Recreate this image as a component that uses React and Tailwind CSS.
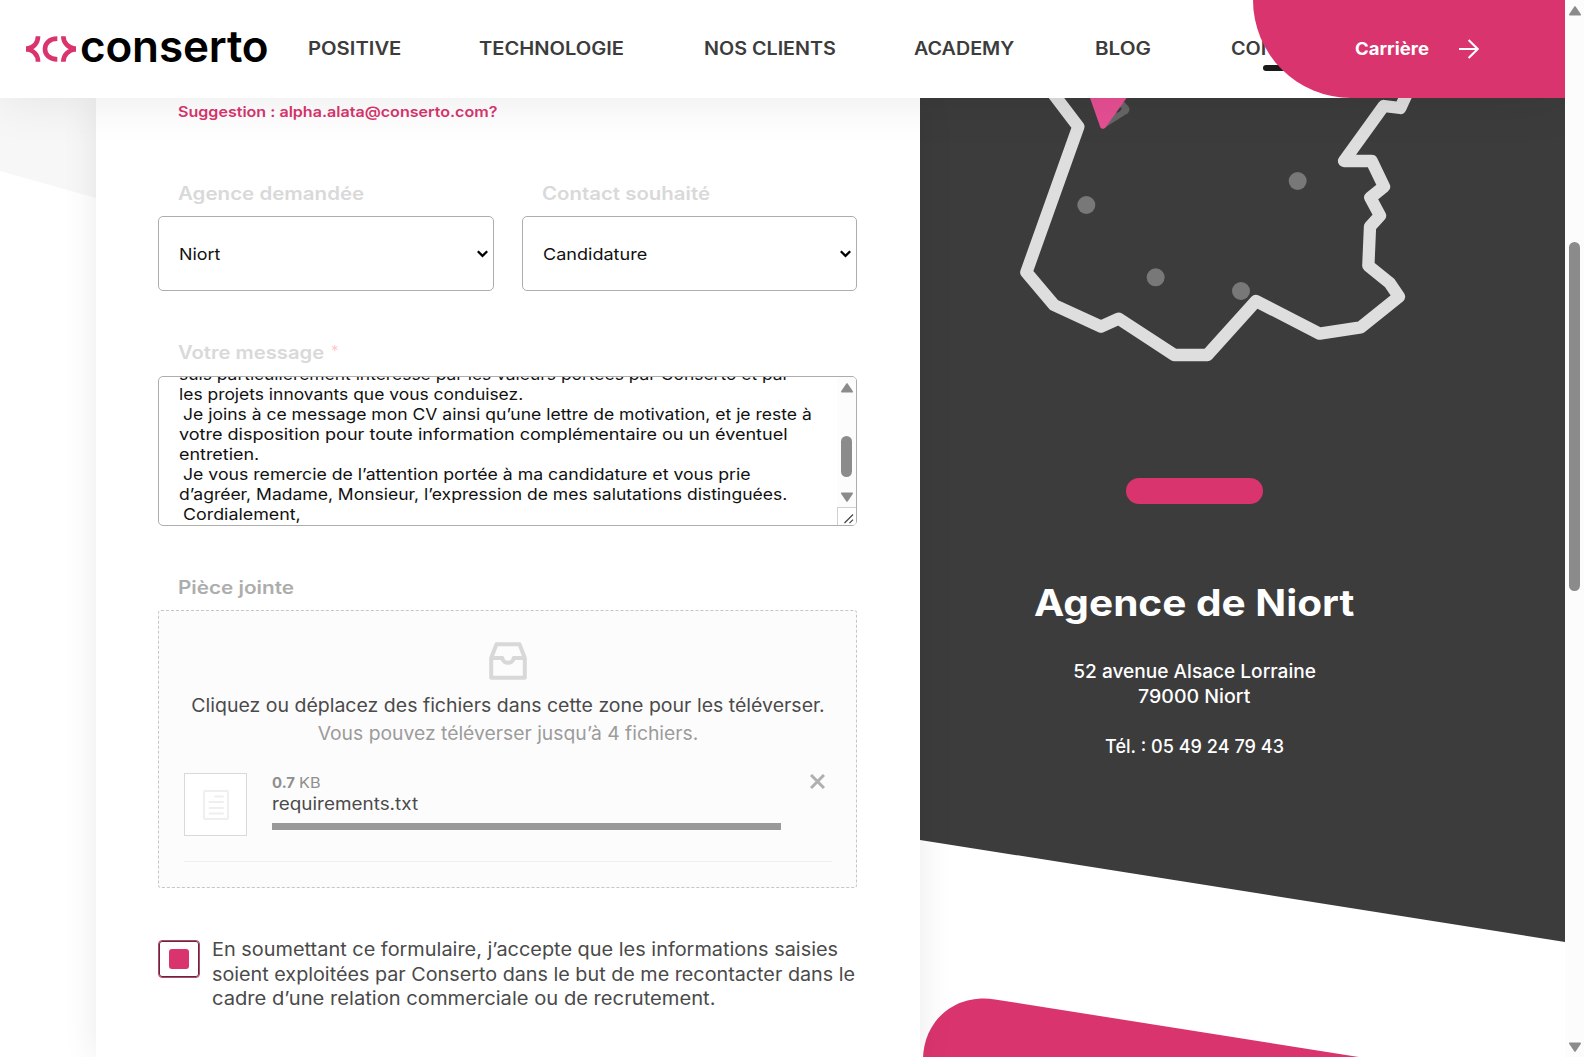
const NAV = [
  { label: "POSITIVE", box: "w-[171px]", cls: "scale-x-[1.125]" },
  { label: "TECHNOLOGIE", box: "w-[225px]", cls: "scale-x-[1.117]" },
  { label: "NOS CLIENTS", box: "w-[210px]", cls: "scale-x-[1.096]" },
  { label: "ACADEMY", box: "w-[181px]", cls: "scale-x-[1.095]" },
  { label: "BLOG", box: "w-[136px]", cls: "scale-x-[1.145]" },
  { label: "CONTACT", box: "w-[100px]", cls: "scale-x-[1.1]" },
];

const MESSAGE = [
  { text: "suis particulièrement intéressé par les valeurs portées par Conserto et par", cls: "scale-x-[1.088]" },
  { text: "les projets innovants que vous conduisez.", cls: "scale-x-[1.089]" },
  { text: "Je joins à ce message mon CV ainsi qu’une lettre de motivation, et je reste à", cls: "ml-[4px] scale-x-[1.095]" },
  { text: "votre disposition pour toute information complémentaire ou un éventuel", cls: "scale-x-[1.127]" },
  { text: "entretien.", cls: "scale-x-[1.12]" },
  { text: "Je vous remercie de l’attention portée à ma candidature et vous prie", cls: "ml-[4px] scale-x-[1.104]" },
  { text: "d’agréer, Madame, Monsieur, l’expression de mes salutations distinguées.", cls: "scale-x-[1.095]" },
  { text: "Cordialement,", cls: "ml-[4px] scale-x-[1.115]" },
];

function Logo() {
  return (
    <div className="flex w-[308px] items-center pl-[25.5px]">
      <svg width="50" height="26" viewBox="30 50 150 76" fill="none" stroke="#d9346d" className="shrink-0">
        <path d="M66 50C66 69 54 85 30 88C54 91 66 107 66 126" strokeWidth="14" />
        <path d="M124 57C100 57 87 71 87 88C87 105 100 119 124 119" strokeWidth="14" />
        <path d="M142 50C142 69 156 85 180 88C156 91 142 107 142 126" strokeWidth="14" />
        <path d="M30 80L46 84V92L30 96ZM180 80L164 84V92L180 96Z" fill="#d9346d" stroke="none" />
      </svg>
      <span className="ml-[4.5px] -translate-y-[3.5px] text-[44px] leading-none font-semibold tracking-[-0.15px] text-black">
        conserto
      </span>
    </div>
  );
}

function Header() {
  return (
    <header className="relative z-20 flex h-[98px] shrink-0 items-center bg-white shadow-[0_0_54px_rgba(0,0,0,0.09)]">
      <Logo />
      <nav className="flex text-[18px] leading-6 font-semibold text-[#3c3c3c]">
        {NAV.map((n) => (
          <a key={n.label} className={"block " + n.box}>
            <span className={"inline-block origin-left whitespace-nowrap " + n.cls}>{n.label}</span>
          </a>
        ))}
      </nav>
      <div className="absolute top-[65px] left-[1263px] h-[6px] w-[60px] rounded-full bg-[#1a1a1a]" />
      <div className="absolute top-0 right-0 flex h-[98px] w-[312px] items-center rounded-bl-[98px] bg-[#d9346d] pl-[102px] text-white">
        <span className="w-[104px] text-[17.5px] leading-6 font-bold">
          <span className="inline-block origin-left scale-x-[1.058]">Carrière</span>
        </span>
        <svg width="20" height="20" viewBox="0 0 20 20" fill="none" stroke="currentColor" strokeWidth="2.1">
          <path d="M0 10H18.6M9.6 0.9L18.7 10L9.6 19.1" />
        </svg>
      </div>
    </header>
  );
}

function Select({ label, value, labelCls, valueCls, width }) {
  return (
    <div className={width}>
      <div className="h-6 pl-[20px] text-[18px] leading-6 font-semibold whitespace-nowrap text-[#d9d9d9]">
        <span className={"inline-block origin-left " + labelCls}>{label}</span>
      </div>
      <div className="mt-[10px] flex h-[75px] items-center justify-between rounded-[5px] border border-[#adadad] pr-[5px] pl-[20px]">
        <span className={"inline-block origin-left text-[16.5px] leading-6 text-[#111] " + valueCls}>{value}</span>
        <svg width="11" height="8" viewBox="0 0 11 8" fill="none" stroke="#000" strokeWidth="2.3">
          <path d="M0.8 1.2L5.5 5.9L10.2 1.2" />
        </svg>
      </div>
    </div>
  );
}

function MessageBox() {
  return (
    <div className="mt-[11px] flex h-[150px] overflow-hidden rounded-[5px] border border-[#adadad]">
      <div className="-mt-[13px] h-[161px] w-[678px] shrink-0 pl-[20px] text-[16px] leading-5 text-[#111]">
        {MESSAGE.map((m) => (
          <div key={m.text} className="h-5 whitespace-nowrap">
            <span className={"inline-block origin-left " + m.cls}>{m.text}</span>
          </div>
        ))}
      </div>
      <div className="flex w-[19px] flex-col items-center bg-[#fcfcfc]">
        <Triangle className="mt-[6px]" />
        <div className="mt-[43px] h-[41px] w-[11px] shrink-0 rounded-full bg-[#8b8b8b]" />
        <Triangle className="mt-[15px] rotate-180" />
        <div className="mt-[5px] flex h-[19px] w-full items-end justify-end border-t border-l border-[#d0d0d0] bg-white p-[2px] pb-[1px]">
          <svg width="10" height="10" viewBox="0 0 10 10" stroke="#444" strokeWidth="1.2">
            <path d="M0.5 9L9 0.5M5.5 9.2L9 5.7" />
          </svg>
        </div>
      </div>
    </div>
  );
}

function Triangle({ className = "" }) {
  return (
    <svg width="12" height="10" viewBox="0 0 12 10" className={"shrink-0 " + className} fill="#8b8b8b" stroke="#8b8b8b" strokeWidth="1.6" strokeLinejoin="round">
      <path d="M6 1L11.2 8.8H0.8Z" />
    </svg>
  );
}

function Upload() {
  return (
    <div className="mt-[10px] flex h-[278px] flex-col rounded-[3px] border border-dashed border-[#c6c6c6] bg-[#fcfcfc] pr-[24px] pl-[25px]">
      <svg width="38" height="38" viewBox="0 0 38 38" className="mt-[31px] self-center" fill="none" stroke="#d8d8d8" strokeWidth="4" strokeLinejoin="round">
        <path d="M7.5 2.3H30.5L35.8 16V35.7H2.2V16Z" />
        <path d="M2.2 16H13.3C14 22.3 24 22.3 24.7 16H35.8" />
      </svg>
      <div className="mt-[11px] text-center text-[18.5px] leading-7 whitespace-nowrap text-[#4a4a4a]">
        <div className="scale-x-[1.054]">Cliquez ou déplacez des fichiers dans cette zone pour les téléverser.</div>
        <div className="scale-x-[1.044] text-[#9b9b9b]">Vous pouvez téléverser jusqu’à 4 fichiers.</div>
      </div>
      <div className="mt-[26px] flex border-b border-[#efefef] pb-[25px]">
        <div className="flex h-[63px] w-[63px] items-center justify-center border border-[#d9d9d9] bg-white">
          <svg width="26" height="30" viewBox="0 0 26 30" fill="none" stroke="#efefef" strokeWidth="2" strokeLinecap="round">
            <rect x="1" y="1" width="24" height="28" rx="1" />
            <path d="M12 6.5H20M6.5 12H20M6.5 18H20M6.5 23.5H20" />
          </svg>
        </div>
        <div className="ml-[25px] w-[509px]">
          <div className="flex h-5 gap-[5px] text-[14.5px] leading-5 text-[#8f8f8f]">
            <b className="origin-left scale-x-[1.03]">0.7</b>
            <span className="origin-left scale-x-[1.12]">KB</span>
          </div>
          <div className="text-[17px] leading-[22px] text-[#4a4a4a]">
            <span className="inline-block origin-left scale-x-[1.111]">requirements.txt</span>
          </div>
          <div className="mt-[8px] h-[7px] bg-[#999]" />
        </div>
        <svg width="15" height="15" viewBox="0 0 15 15" className="mt-[1px] ml-[29px]" stroke="#b0b0b0" strokeWidth="3">
          <path d="M1 1L14 14M14 1L1 14" />
        </svg>
      </div>
    </div>
  );
}

function Form() {
  return (
    <main className="relative z-10 w-[824px] shrink-0 bg-white pr-[63px] pl-[62px] shadow-[0_0_34px_rgba(0,0,0,0.085)]">
      <div className="mt-[4px] pl-[20px] text-[14.5px] leading-5 font-semibold text-[#d9346d]">
        <span className="inline-block origin-left scale-x-[1.108]">Suggestion : alpha.alata@conserto.com?</span>
      </div>
      <div className="mt-[60px] flex justify-between">
        <Select width="w-[336px]" label="Agence demandée" labelCls="scale-x-[1.14]" value="Niort" valueCls="scale-x-[1.085]" />
        <Select width="w-[335px]" label="Contact souhaité" labelCls="scale-x-[1.134]" value="Candidature" valueCls="scale-x-[1.094]" />
      </div>
      <div className="mt-[50px] flex h-6 pl-[20px] text-[18px] leading-6 font-semibold text-[#d9d9d9]">
        <div className="w-[153px]">
          <span className="inline-block origin-left scale-x-[1.123] whitespace-nowrap">Votre message</span>
        </div>
        <span className="text-[15px] leading-5 font-normal text-[#ffc9c9]">*</span>
      </div>
      <MessageBox />
      <div className="mt-[50px] pl-[20px] text-[18px] leading-6 font-semibold text-[#adadad]">
        <span className="inline-block origin-left scale-x-[1.15]">Pièce jointe</span>
      </div>
      <Upload />
      <div className="mt-[52px] flex">
        <div className="h-[38px] w-[42px] shrink-0 rounded-[4px] border border-[#d9346d]">
          <div className="flex h-full items-center justify-center rounded-[3px] border border-[#3c3c3c]">
            <div className="h-[20px] w-[20px] rounded-[3px] bg-[#d9346d]" />
          </div>
        </div>
        <div className="-mt-[3px] ml-[12px] text-[18.5px] leading-[24.5px] whitespace-nowrap text-[#4a4a4a]">
          <div className="w-0 origin-left">
            <span className="inline-block origin-left scale-x-[1.076]">En soumettant ce formulaire, j’accepte que les informations saisies</span>
          </div>
          <div className="w-0">
            <span className="inline-block origin-left scale-x-[1.068]">soient exploitées par Conserto dans le but de me recontacter dans le</span>
          </div>
          <div className="w-0">
            <span className="inline-block origin-left scale-x-[1.089]">cadre d’une relation commerciale ou de recrutement.</span>
          </div>
        </div>
      </div>
    </main>
  );
}

function FranceMap() {
  return (
    <svg width="450" height="282" viewBox="0 54 1350 846" className="ml-[60px] block" fill="none">
      <path
        d="M215 35L295 140L139 577L222 675L363 740L416 716L583 825H682L828 663L1019 761L1142 742L1257 650L1229 609L1165 557L1170 440L1200 407L1171 353L1212 320L1175 243H1092L1211 78L1261 84L1290 20"
        stroke="#dedede"
        strokeWidth="37"
        strokeLinejoin="round"
      />
      <g fill="#787878">
        <circle cx="319" cy="375" r="27" />
        <circle cx="527" cy="592" r="27" />
        <circle cx="783" cy="633" r="27" />
        <circle cx="953" cy="303" r="27" />
      </g>
      <path d="M368 147L443 100Q452 90 446 80L432 65L410 54L350 110Z" fill="#666" />
      <path d="M405 98Q420 100 426 84L415 80Z" fill="#3c3c3c" />
      <path d="M328 48H444L377 142Q368 151 361 142Z" fill="#e64f93" />
    </svg>
  );
}

function Agency() {
  return (
    <aside className="relative w-[645px] shrink-0 overflow-hidden bg-white">
      <div className="h-[844px] bg-[#3c3c3c] [clip-path:polygon(0_0,100%_0,100%_100%,0_87.9%)]">
        <FranceMap />
        <div className="flex w-[549px] flex-col items-center text-white">
          <div className="mt-[98px] h-[26px] w-[137px] rounded-full bg-[#d9346d]" />
          <h2 className="mt-[75px] scale-x-[1.111] text-[36.5px] leading-[48px] font-bold whitespace-nowrap">Agence de Niort</h2>
          <p className="mt-[32px] scale-x-[1.032] text-[18.5px] leading-[25px] font-medium">52 avenue Alsace Lorraine</p>
          <p className="scale-x-[1.056] text-[18.5px] leading-[25px] font-medium">79000 Niort</p>
          <p className="mt-[25px] scale-x-[0.978] text-[18.5px] leading-[25px] font-medium">Tél. : 05 49 24 79 43</p>
        </div>
      </div>
      <div className="absolute top-[890px] left-[3px] h-[400px] w-[700px] origin-top-left skew-y-[9deg] rounded-tl-[72px] bg-[#d9346d]" />
    </aside>
  );
}

export default function App() {
  return (
    <div className="flex h-[1057px] w-[1584px] overflow-hidden bg-white font-['Inter','Liberation_Sans',sans-serif]">
      <div className="flex w-[1565px] flex-col overflow-hidden">
        <Header />
        <div className="flex h-[959px]">
          <div className="w-[96px] shrink-0">
            <div className="h-[100px] bg-[#f7f7f7] [clip-path:polygon(0_0,100%_0,100%_100%,0_73%)]" />
          </div>
          <Form />
          <Agency />
        </div>
      </div>
      <div className="flex w-[19px] flex-col items-center bg-[#fcfcfc]">
        <Triangle className="mt-[6px]" />
        <div className="mt-[226px] h-[349px] w-[11px] rounded-full bg-[#8b8b8b]" />
        <Triangle className="mt-[451px] rotate-180" />
      </div>
    </div>
  );
}
